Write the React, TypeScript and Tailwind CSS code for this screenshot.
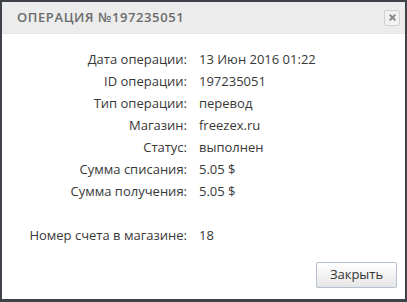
import { X } from 'lucide-react';

const rows: [string, string][] = [
  ['Дата операции:', '13 Июн 2016 01:22'],
  ['ID операции:', '197235051'],
  ['Тип операции:', 'перевод'],
  ['Магазин:', 'freezex.ru'],
  ['Статус:', 'выполнен'],
  ['Сумма списания:', '5.05 $'],
  ['Сумма получения:', '5.05 $'],
  ['', ''],
  ['Номер счета в магазине:', '18'],
];

export default function App() {
  return (
    <div className="w-[407px] h-[302px] bg-[#3d4349] pt-[2px] pl-[2px] pr-[2px] pb-[3px] font-['Open_Sans',sans-serif]">
      <div className="flex flex-col h-full bg-white">
        <div className="flex items-center justify-between h-[32px] bg-[#ececec] border-b border-[#e6e6e6] pl-[15px] pr-[5px]">
          <span className="text-[13px] font-semibold tracking-[0.6px] text-[#6b6b6b]">
            ОПЕРАЦИЯ №197235051
          </span>
          <button
            type="button"
            className="flex items-center justify-center w-[16px] h-[16px] border border-[#d2d2d2] bg-[#f1f1f1] rounded-[2px]"
          >
            <X className="w-[9px] h-[9px] text-[#888]" strokeWidth={5} />
          </button>
        </div>

        <div className="grid grid-cols-[185px_1fr] gap-x-[12px] pt-[14px] text-[13px] text-[#383838]">
          {rows.map(([label, value], i) => (
            <div key={i} className="contents">
              <span className="h-[22px] leading-[22px] text-right">{label}</span>
              <span className="h-[22px] leading-[22px]">{value}</span>
            </div>
          ))}
        </div>

        <div className="flex justify-end mt-auto pr-[8px] pb-[11px]">
          <button
            type="button"
            className="w-[81px] h-[26px] border border-[#b4c0cc] rounded-[2px] bg-gradient-to-b from-white to-[#e6e6e6] text-[13px] text-[#333]"
          >
            Закрыть
          </button>
        </div>
      </div>
    </div>
  );
}
